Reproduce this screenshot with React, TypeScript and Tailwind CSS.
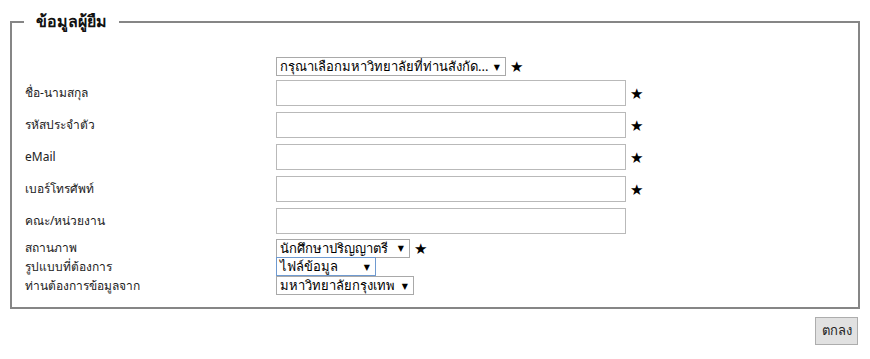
import React from 'react';

const font = '"Noto Sans", Tahoma, "DejaVu Sans", sans-serif';

function Star() {
  return <span className="ml-[4px] text-[15px] leading-none text-black">★</span>;
}

function Select({ value, width, focused }: { value: string; width: string; focused?: boolean }) {
  return (
    <div
      className={`flex h-[19px] items-center justify-between border bg-white pl-[3px] pr-[5px] text-[13px] leading-[17px] text-black ${width} ${
        focused ? 'border-[#6f9ad0]' : 'border-[#a9a9a9]'
      }`}
    >
      <span className="whitespace-nowrap">{value}</span>
      <span className="ml-[4px] shrink-0 text-[8px] leading-none">▼</span>
    </div>
  );
}

const textRows = [
  { label: 'ชื่อ-นามสกุล', star: true },
  { label: 'รหัสประจำตัว', star: true },
  { label: 'eMail', star: true },
  { label: 'เบอร์โทรศัพท์', star: true },
  { label: 'คณะ/หน่วยงาน', star: false },
];

export default function App() {
  return (
    <div className="h-[359px] w-[870px] bg-white text-[12px] text-[#222]" style={{ fontFamily: font }}>
      <div className="px-[10px] pt-[21px]">
        {/* Fieldset */}
        <div className="relative h-[288px] border-2 border-[#868686] pl-[13px] pt-[34px]">
          <div className="absolute left-[12px] top-[-13px] bg-white px-[12px] text-[16px] font-bold leading-[22px] text-[#111]">
            ข้อมูลผู้ยืม
          </div>

          <div className="flex items-center">
            <div className="w-[251px]" />
            <Select value="กรุณาเลือกมหาวิทยาลัยที่ท่านสังกัด..." width="w-[230px]" />
            <Star />
          </div>

          <div className="mt-[4px] flex flex-col gap-[6px]">
            {textRows.map((row) => (
              <div key={row.label} className="flex items-center">
                <div className="w-[251px]">{row.label}</div>
                <div className="h-[26px] w-[350px] border border-[#b9b9b9] bg-white" />
                {row.star && <Star />}
              </div>
            ))}
          </div>

          <div className="mt-[5px] flex flex-col">
            <div className="flex h-[18px] items-center">
              <div className="w-[251px]">สถานภาพ</div>
              <Select value="นักศึกษาปริญญาตรี" width="w-[134px]" />
              <Star />
            </div>
            <div className="flex h-[19px] items-center">
              <div className="w-[251px]">รูปแบบที่ต้องการ</div>
              <Select value="ไฟล์ข้อมูล" width="w-[100px]" focused />
            </div>
            <div className="flex h-[19px] items-center">
              <div className="w-[251px]">ท่านต้องการข้อมูลจาก</div>
              <Select value="มหาวิทยาลัยกรุงเทพ" width="w-[138px]" />
            </div>
          </div>
        </div>

        <div className="mt-[8px] flex justify-end pr-[2px]">
          <button className="h-[28px] w-[43px] border border-[#adadad] bg-[#e1e1e1] text-[13px] text-[#222]">
            ตกลง
          </button>
        </div>
      </div>
    </div>
  );
}
